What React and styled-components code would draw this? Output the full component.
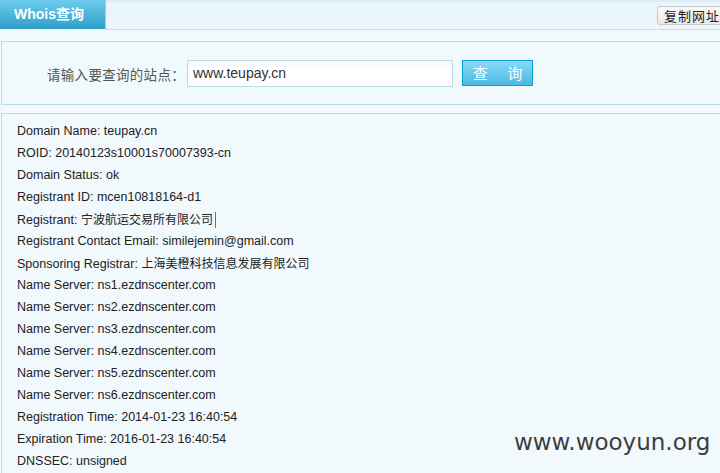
import styled, { createGlobalStyle } from "styled-components";

const GlobalStyle = createGlobalStyle`
  html, body {
    margin: 0;
    padding: 0;
    background: #f3fafd;
    overflow: hidden;
  }
  body {
    font-family: "Liberation Sans", Arial, "Noto Sans CJK SC", sans-serif;
    font-size: 12px;
    color: #222;
  }
`;

const records = [
  "Domain Name: teupay.cn",
  "ROID: 20140123s10001s70007393-cn",
  "Domain Status: ok",
  "Registrant ID: mcen10818164-d1",
  "Registrant: 宁波航运交易所有限公司",
  "Registrant Contact Email: similejemin@gmail.com",
  "Sponsoring Registrar: 上海美橙科技信息发展有限公司",
  "Name Server: ns1.ezdnscenter.com",
  "Name Server: ns2.ezdnscenter.com",
  "Name Server: ns3.ezdnscenter.com",
  "Name Server: ns4.ezdnscenter.com",
  "Name Server: ns5.ezdnscenter.com",
  "Name Server: ns6.ezdnscenter.com",
  "Registration Time: 2014-01-23 16:40:54",
  "Expiration Time: 2016-01-23 16:40:54",
  "DNSSEC: unsigned",
];

// chinese runs get a slightly smaller size than latin text
const renderLine = (line) =>
  line
    .split(/([\u4e00-\u9fff]+)/)
    .map((part, i) =>
      /[\u4e00-\u9fff]/.test(part) ? <Cjk key={i}>{part}</Cjk> : part
    );

const App = () => {
  return (
    <Page>
      <GlobalStyle />
      <TopBar>
        <Tab>Whois查询</Tab>
        <TopFill>
          <CopyButton>复制网址</CopyButton>
        </TopFill>
      </TopBar>

      <SearchPanel>
        <Label>请输入要查询的站点：</Label>
        <Input defaultValue="www.teupay.cn" />
        <QueryButton>查 询</QueryButton>
      </SearchPanel>

      <ResultPanel>
        {records.map((line, i) => (
          <Row key={i}>
            {renderLine(line)}
            {i === 4 && <Caret />}
          </Row>
        ))}
      </ResultPanel>

      <Watermark>www.wooyun.org</Watermark>
    </Page>
  );
};

const Page = styled.div`
  position: relative;
  width: 720px;
  height: 473px;
  overflow: hidden;
`;

const TopBar = styled.div`
  display: flex;
  height: 30px;
  background: linear-gradient(#d5ecf7 0, #e9f4fb 3px, #eef6fc 100%);
`;

const Tab = styled.div`
  width: 106px;
  height: 29px;
  box-sizing: border-box;
  padding-left: 14px;
  line-height: 29px;
  font-size: 14px;
  font-weight: bold;
  color: #fff;
  font-family: "Liberation Sans", Arial, "Noto Sans CJK SC", sans-serif;
  background: linear-gradient(#6dcbec, #2f9fcc);
  border-right: 1px solid #9fcfe4;
`;

const TopFill = styled.div`
  flex: 1;
  display: flex;
  justify-content: flex-end;
  align-items: flex-start;
  padding-top: 6px;
  border-bottom: 1px dotted #b4c4cc;
  height: 23px;
`;

const CopyButton = styled.button`
  margin-right: -9px;
  height: 19px;
  padding: 0 8px 0 6px;
  font-size: 13px;
  line-height: 17px;
  color: #222;
  font-family: "Noto Sans CJK SC", sans-serif;
  background: linear-gradient(#fafafa, #eaeaea);
  border: 1px solid #c8c8c8;
  border-radius: 3px;
  letter-spacing: 1px;
`;

const SearchPanel = styled.div`
  display: flex;
  align-items: center;
  margin: 11px -10px 0 1px;
  height: 62px;
  padding-left: 45px;
  border: 1px solid #b6dce9;
  background: #f0f9fc;
`;

const Label = styled.span`
  font-size: 13.5px;
  color: #555;
  font-family: "Noto Sans CJK SC", sans-serif;
  margin-right: 2px;
  margin-top: 1px;
  letter-spacing: 0.3px;
`;

const Input = styled.input`
  width: 266px;
  height: 27px;
  box-sizing: border-box;
  padding: 0 6px 0 5px;
  border: 1px solid #bddbe7;
  background: linear-gradient(#f2f8fb, #fff 40%);
  font-family: "Liberation Sans", Arial, sans-serif;
  font-size: 14px;
  color: #333;
  outline: none;
`;

const QueryButton = styled.button`
  margin-left: 9px;
  width: 71px;
  height: 26px;
  border: 1px solid #0b9fdc;
  background: linear-gradient(#86dbf6, #4ab9e3);
  color: #fff;
  font-family: "Noto Sans CJK SC", sans-serif;
  font-size: 15px;
  letter-spacing: 8px;
  padding: 0 0 0 8px;
  line-height: 22px;
`;

const ResultPanel = styled.div`
  margin: 8px -10px 0 1px;
  padding: 6px 0 0 15px;
  border-left: 1px solid #b6dce9;
  border-top: 1px solid #b6dce9;
  background: #f1f9fd;
  height: 380px;
`;

const Row = styled.div`
  height: 22px;
  line-height: 22px;
  font-size: 12.5px;
  color: #222;
  font-family: "Liberation Sans", Arial, "Noto Sans CJK SC", sans-serif;
`;

const Cjk = styled.span`
  font-size: 12px;
  font-family: "Noto Sans CJK SC", sans-serif;
`;

const Caret = styled.span`
  display: inline-block;
  width: 1px;
  height: 16px;
  margin-left: 2px;
  vertical-align: -4px;
  background: #3a78c4;
`;

const Watermark = styled.div`
  position: absolute;
  left: 514px;
  top: 429px;
  font-family: "DejaVu Sans", Verdana, sans-serif;
  font-size: 23px;
  color: #3d3d3d;
`;

export default App;
